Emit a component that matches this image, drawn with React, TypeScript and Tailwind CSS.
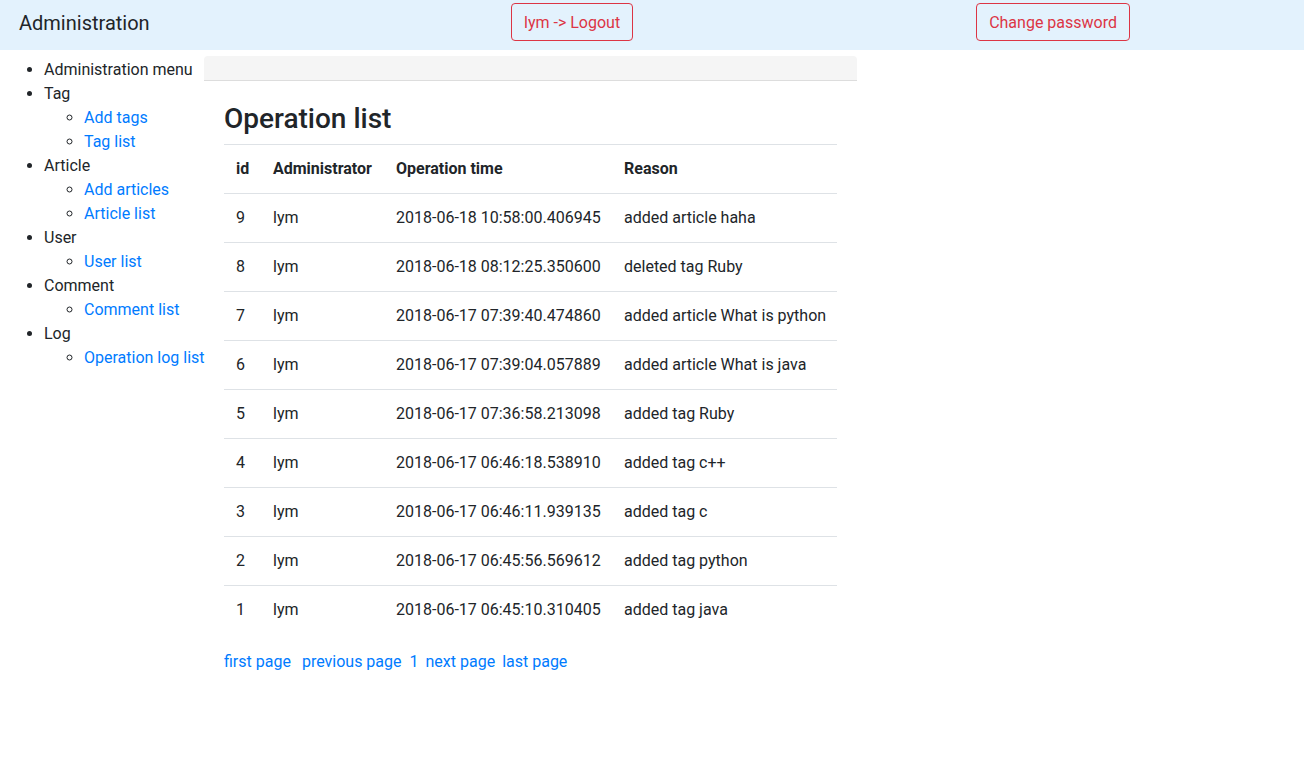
import React from 'react';

const rows = [
  { id: 9, admin: 'lym', time: '2018-06-18 10:58:00.406945', reason: 'added article haha' },
  { id: 8, admin: 'lym', time: '2018-06-18 08:12:25.350600', reason: 'deleted tag Ruby' },
  { id: 7, admin: 'lym', time: '2018-06-17 07:39:40.474860', reason: 'added article What is python' },
  { id: 6, admin: 'lym', time: '2018-06-17 07:39:04.057889', reason: 'added article What is java' },
  { id: 5, admin: 'lym', time: '2018-06-17 07:36:58.213098', reason: 'added tag Ruby' },
  { id: 4, admin: 'lym', time: '2018-06-17 06:46:18.538910', reason: 'added tag c++' },
  { id: 3, admin: 'lym', time: '2018-06-17 06:46:11.939135', reason: 'added tag c' },
  { id: 2, admin: 'lym', time: '2018-06-17 06:45:56.569612', reason: 'added tag python' },
  { id: 1, admin: 'lym', time: '2018-06-17 06:45:10.310405', reason: 'added tag java' },
];

const menu = [
  { title: 'Administration menu', links: [] as string[] },
  { title: 'Tag', links: ['Add tags', 'Tag list'] },
  { title: 'Article', links: ['Add articles', 'Article list'] },
  { title: 'User', links: ['User list'] },
  { title: 'Comment', links: ['Comment list'] },
  { title: 'Log', links: ['Operation log list'] },
];

export default function App() {
  return (
    <div className="min-h-[760px] bg-white text-[#212529] text-base leading-6 font-['Roboto',_sans-serif]">
      {/* Top navbar */}
      <header className="h-[50px] bg-[#e3f2fd] flex items-start pl-[19px]">
        <span className="mt-[8px] text-[20px] leading-[30px] w-[492px]">Administration</span>
        <button className="mt-[3px] h-[38px] px-3 pt-[2px] border border-[#dc3545] rounded text-[#dc3545] leading-6 whitespace-nowrap">
          lym -&gt; Logout
        </button>
        <button className="mt-[3px] ml-[343px] h-[38px] px-3 pt-[2px] border border-[#dc3545] rounded text-[#dc3545] leading-6 whitespace-nowrap">
          Change password
        </button>
      </header>

      <div className="flex pt-[6px]">
        {/* Sidebar menu */}
        <ul className="w-[204px] shrink-0 list-disc pl-[44px] mt-[2px] whitespace-nowrap">
          {menu.map((m) => (
            <li key={m.title}>
              {m.title}
              {m.links.length > 0 && (
                <ul className="list-[circle] pl-10">
                  {m.links.map((l) => (
                    <li key={l}>
                      <a href="#" className="text-[#007bff]">{l}</a>
                    </li>
                  ))}
                </ul>
              )}
            </li>
          ))}
        </ul>

        {/* Main content */}
        <main className="w-[653px] shrink-0">
          <div className="h-[25px] bg-[#f5f5f5] border-b border-[#dddddd] rounded-t" />
          <div className="px-5 pt-[21px]">
            <h3 className="text-[28px] leading-[1.2] font-medium mb-2">Operation list</h3>
            <table className="w-full table-fixed border-collapse text-left whitespace-nowrap">
              <thead>
                <tr className="border-t border-[#dee2e6]">
                  <th className="w-[37px] p-3 font-bold">id</th>
                  <th className="w-[123px] p-3 font-bold">Administrator</th>
                  <th className="w-[228px] p-3 font-bold">Operation time</th>
                  <th className="p-3 font-bold">Reason</th>
                </tr>
              </thead>
              <tbody>
                {rows.map((r) => (
                  <tr key={r.id} className="border-t border-[#dee2e6]">
                    <td className="p-3">{r.id}</td>
                    <td className="p-3">{r.admin}</td>
                    <td className="p-3">{r.time}</td>
                    <td className="p-3">{r.reason}</td>
                  </tr>
                ))}
              </tbody>
            </table>
            <div className="mt-4 text-[#007bff] whitespace-nowrap">
              <a href="#" className="mr-[11px]">first page</a>
              <a href="#" className="mr-[8px]">previous page</a>
              <a href="#" className="mr-[7px]">1</a>
              <a href="#" className="mr-[7px]">next page</a>
              <a href="#">last page</a>
            </div>
          </div>
        </main>
      </div>
    </div>
  );
}
